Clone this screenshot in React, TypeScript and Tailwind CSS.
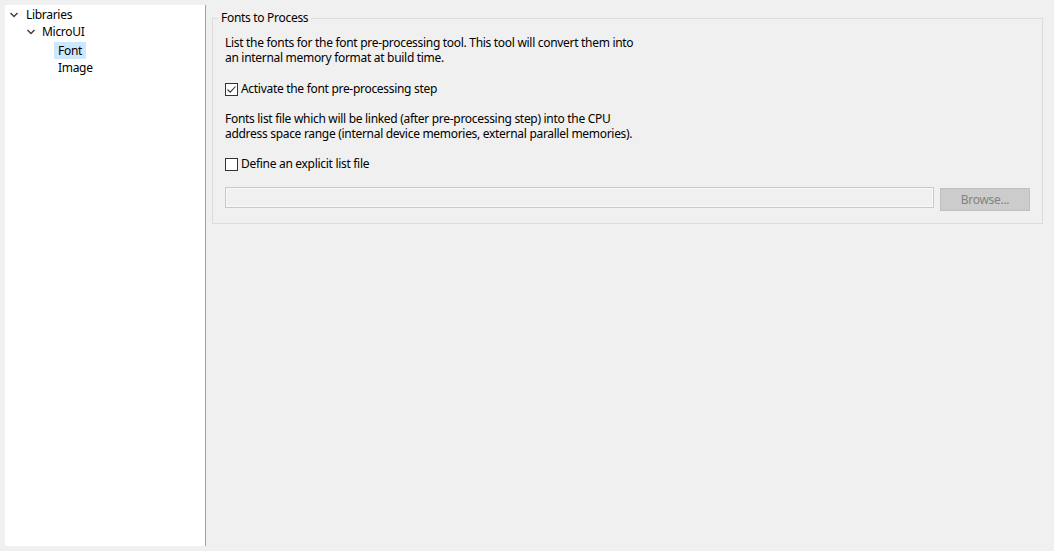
import React from 'react';

const font = { fontFamily: '"Noto Sans", "Segoe UI", sans-serif', letterSpacing: '-0.3px' };

function Chevron() {
  return (
    <svg width="10" height="10" viewBox="0 0 10 10" className="shrink-0">
      <path d="M1.5 3 L5 6.5 L8.5 3" fill="none" stroke="#404040" strokeWidth="1.5" />
    </svg>
  );
}

function CheckBox({ checked, label }: { checked: boolean; label: string }) {
  return (
    <label className="flex items-center h-[16px]">
      <span className="w-[13px] h-[13px] border border-[#333333] bg-white flex items-center justify-center shrink-0">
        {checked && (
          <svg width="11" height="11" viewBox="0 0 11 11">
            <path d="M1.5 5.5 L4.2 8.2 L9.5 2.5" fill="none" stroke="#333333" strokeWidth="1.1" />
          </svg>
        )}
      </span>
      <span className="ml-[3px]">{label}</span>
    </label>
  );
}

export default function App() {
  return (
    <div className="w-[1054px] h-[551px] bg-[#f0f0f0] flex pt-[5px] pb-[5px] pl-[5px] text-[12px] text-black" style={font}>
      <div className="w-[201px] h-[541px] bg-white border-r border-[#a0a0a0] pt-[1px]">
        <div className="flex items-center h-[17px] pl-[4px] gap-[7px]">
          <Chevron />
          <span>Libraries</span>
        </div>
        <div className="flex items-center h-[18px] pl-[21px] gap-[6px]">
          <Chevron />
          <span>MicroUI</span>
        </div>
        <div className="flex items-center h-[18px] pl-[49px]">
          <span className="bg-[#cce8ff] px-[4px] leading-[17px]">Font</span>
        </div>
        <div className="flex items-center h-[18px] pl-[53px]">
          <span>Image</span>
        </div>
      </div>

      <div className="flex-1 pl-[6px] pr-[11px] pt-[5px]">
        <fieldset className="border border-[#dcdcdc] px-[12px] pb-[12px]">
          <legend className="ml-[-7px] px-[3px] leading-[16px]">Fonts to Process</legend>
          <p className="mt-[9px] leading-[15px]">
            List the fonts for the font pre-processing tool. This tool will convert them into
            <br />
            an internal memory format at build time.
          </p>
          <div className="mt-[16px]">
            <CheckBox checked label="Activate the font pre-processing step" />
          </div>
          <p className="mt-[14px] leading-[15px]">
            Fonts list file which will be linked (after pre-processing step) into the CPU
            <br />
            address space range (internal device memories, external parallel memories).
          </p>
          <div className="mt-[15px]">
            <CheckBox checked={false} label="Define an explicit list file" />
          </div>
          <div className="mt-[15px] flex items-start gap-[6px]">
            <div className="flex-1 h-[21px] border border-[#c8c8c8] bg-[#f0f0f0]">
              <div className="h-full border border-[#f9f9f9]" />
            </div>
            <button className="w-[90px] h-[23px] mt-[1px] bg-[#cccccc] border border-[#bfbfbf] text-[#838383]">
              Browse...
            </button>
          </div>
        </fieldset>
      </div>
    </div>
  );
}
